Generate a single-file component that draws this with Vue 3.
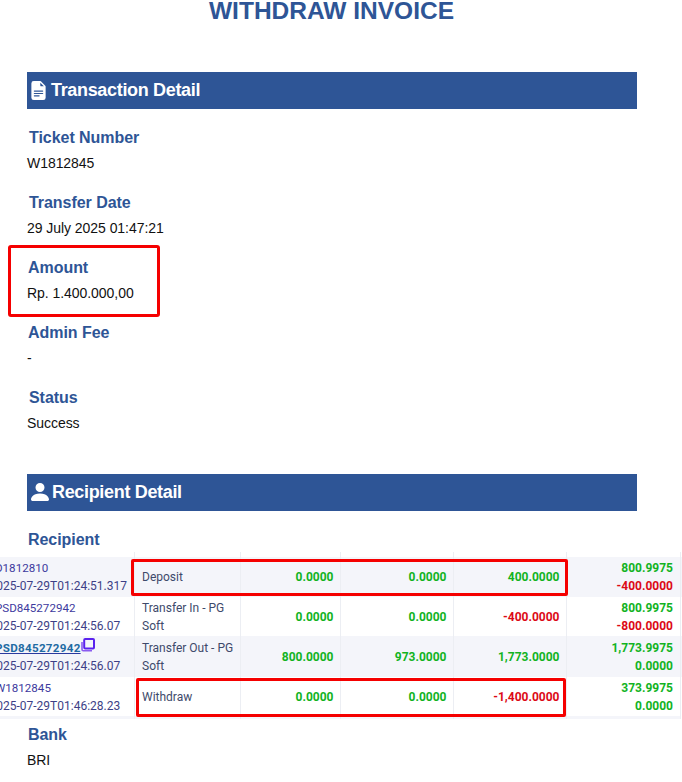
<script setup>
const rows = [
  { id: 'D1812810', date: '2025-07-29T01:24:51.317', type: 'Deposit', a: '0.0000', b: '0.0000', c: '400.0000', cNeg: false, d: '800.9975', e: '-400.0000', eNeg: true },
  { id: 'PSD845272942', date: '2025-07-29T01:24:56.07', type: 'Transfer In - PG Soft', a: '0.0000', b: '0.0000', c: '-400.0000', cNeg: true, d: '800.9975', e: '-800.0000', eNeg: true },
  { id: 'PSD845272942', link: true, date: '2025-07-29T01:24:56.07', type: 'Transfer Out - PG Soft', a: '800.0000', b: '973.0000', c: '1,773.0000', cNeg: false, d: '1,773.9975', e: '0.0000', eNeg: false },
  { id: 'W1812845', date: '2025-07-29T01:46:28.23', type: 'Withdraw', a: '0.0000', b: '0.0000', c: '-1,400.0000', cNeg: true, d: '373.9975', e: '0.0000', eNeg: false }
]
</script>

<template>
  <div class="page">
    <h1 class="title">WITHDRAW INVOICE</h1>

    <h2 class="bar bar-first">
      <svg class="bar-icon icon-file" viewBox="0 0 16 16" fill="currentColor"><path d="M9.293 0H4a2 2 0 0 0-2 2v12a2 2 0 0 0 2 2h8a2 2 0 0 0 2-2V4.707A1 1 0 0 0 13.707 4L10 .293A1 1 0 0 0 9.293 0zM9.5 3.5v-2l3 3h-2a1 1 0 0 1-1-1zM4.5 9a.5.5 0 0 1 0-1h7a.5.5 0 0 1 0 1h-7zM4 10.5a.5.5 0 0 1 .5-.5h7a.5.5 0 0 1 0 1h-7a.5.5 0 0 1-.5-.5zm.5 2.5a.5.5 0 0 1 0-1h4a.5.5 0 0 1 0 1h-4z"/></svg>
      <span>Transaction Detail</span>
    </h2>

    <div class="field"><div class="label shift">Ticket Number</div><div class="value">W1812845</div></div>
    <div class="field"><div class="label shift">Transfer Date</div><div class="value">29 July 2025 01:47:21</div></div>
    <div class="field">
      <div class="label">Amount</div><div class="value">Rp. 1.400.000,00</div>
      <div class="mark mark-amount"></div>
    </div>
    <div class="field"><div class="label">Admin Fee</div><div class="value">-</div></div>
    <div class="field"><div class="label shift">Status</div><div class="value">Success</div></div>

    <h2 class="bar bar-second">
      <svg class="bar-icon icon-person" viewBox="0 0 16 16" fill="currentColor"><path d="M3 14s-1 0-1-1 1-4 6-4 6 3 6 4-1 1-1 1H3zm5-6a3 3 0 1 0 0-6 3 3 0 0 0 0 6z"/></svg>
      <span>Recipient Detail</span>
    </h2>

    <div class="label recipient">Recipient</div>

    <div class="shot">
      <div class="table">
        <div class="gap-row">
          <i></i><i></i><i></i><i></i><i></i><i></i>
        </div>
        <div v-for="(r, i) in rows" :key="i" class="row" :class="[`row-${i}`, { odd: i % 2 === 0 }]">
          <div class="cell first">
            <div class="id" :class="{ link: r.link }">
              <span>{{ r.id }}</span>
              <svg v-if="r.link" class="copy" viewBox="0 0 14 14" fill="none">
                <path d="M1 4v7.5c0 .8.5 1.2 1.2 1.2H11" stroke="#8a5cf0" stroke-width="1.6"/>
                <rect x="3.2" y="1" width="9.8" height="9.6" rx="1" stroke="#5a22ee" stroke-width="2"/>
              </svg>
            </div>
            <div class="date">{{ r.date }}</div>
          </div>
          <div class="cell type">{{ r.type }}</div>
          <div class="cell num pos">{{ r.a }}</div>
          <div class="cell num pos">{{ r.b }}</div>
          <div class="cell num" :class="r.cNeg ? 'neg' : 'pos'">{{ r.c }}</div>
          <div class="cell num last">
            <div class="pos">{{ r.d }}</div>
            <div :class="r.eNeg ? 'neg' : 'pos'">{{ r.e }}</div>
          </div>
        </div>
        <div class="gap-row foot">
          <i></i><i></i><i></i><i></i><i></i><i></i>
        </div>
      </div>
      <div class="mark mark-deposit"></div>
      <div class="mark mark-withdraw"></div>
    </div>

    <div class="field bank"><div class="label">Bank</div><div class="value">BRI</div></div>
  </div>
</template>

<style>
html, body { margin: 0; background: #fff; overflow: hidden; }
</style>

<style scoped>
.page {
  box-sizing: border-box;
  width: 682px;
  height: 782px;
  padding: 0 45px 0 27px;
  overflow: hidden;
  font-family: "Liberation Sans", Arial, sans-serif;
  color: #111;
}
.title {
  margin: 0;
  padding-right: 1px;
  text-align: center;
  font-size: 24.5px;
  line-height: 21px;
  font-weight: 700;
  color: #2e5596;
}
.bar {
  display: flex;
  align-items: center;
  height: 37px;
  margin: 0;
  background: #2e5596;
  color: #fff;
  font-size: 18px;
  letter-spacing: -0.33px;
  font-weight: 700;
}
.bar-first { margin-top: 51px; margin-bottom: 16px; }
.bar-second { margin-top: 24px; margin-bottom: 17px; }
.bar-icon { flex: none; }
.icon-file { width: 19px; height: 19px; margin: 0 3px 0 2px; }
.icon-person { width: 24px; height: 24px; margin: -1px 0 0 1px; }
.field {
  position: relative;
  height: 65px;
}
.label {
  font-size: 16px;
  line-height: 24px;
  font-weight: 700;
  letter-spacing: -0.05px;
  color: #2e5596;
  padding: 1px 0 0 1px;
}
.label.shift { padding-left: 2px; }
.value {
  margin-top: 1px;
  font-size: 14px;
  line-height: 24px;
  letter-spacing: -0.05px;
}
.recipient { box-sizing: border-box; height: 24px; line-height: 23px; padding-top: 0; }
.shot {
  position: relative;
  margin: 0 -45px 0 -27px;
  height: 167px;
  overflow: hidden;
}
.table {
  margin-left: -14px;
  font-family: Roboto, Arial, sans-serif;
  font-size: 12px;
  line-height: 18px;
  color: #3e4a6b;
}
.gap-row, .row {
  display: grid;
  grid-template-columns: 149px 106px 100px 113px 113px 114px;
}
.gap-row { height: 5px; }
.gap-row i, .cell { border-right: 1px solid #eceef3; }
.row-0 { height: 40px; }
.row-1 { height: 39px; }
.row-2 { height: 41px; }
.row-3 { height: 39px; }
.odd { background: #f4f5fa; }
.cell {
  display: flex;
  flex-direction: column;
  justify-content: center;
  box-sizing: border-box;
  padding: 0 6.5px 0 7px;
}
.first { white-space: nowrap; padding-left: 3.5px; padding-right: 0; }
.id { display: flex; align-items: flex-start; margin-left: 5.5px; font-size: 11.6px; color: #3d3a9e; }
.date { color: #3d3f86; }
.link span { font-weight: 700; letter-spacing: 0.3px; color: #1f6ba3; text-decoration: underline; text-decoration-color: #2a3a9e; }
.copy { width: 14px; height: 14px; margin-top: -1px; flex: none; }
.num { text-align: right; font-weight: 700; }
.last { padding-right: 7px; }
.pos { color: #12b31f; }
.neg { color: #dc0a16; }
.foot { height: 3px; background: #f4f5fa; width: 694px; }
.mark {
  position: absolute;
  box-sizing: border-box;
  border: 3px solid #f50000;
  border-radius: 2px;
  pointer-events: none;
}
.mark-amount { left: -19px; top: -10px; width: 152px; height: 72px; border-radius: 3px; }
.mark-deposit { left: 131px; top: 7px; width: 437px; height: 37px; }
.mark-withdraw { left: 136px; top: 126px; width: 430px; height: 39px; }
.bank { margin-top: 3px; }
</style>
